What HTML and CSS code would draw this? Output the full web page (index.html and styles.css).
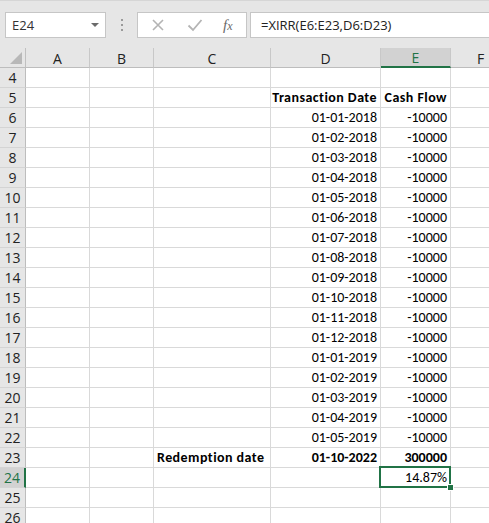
FILE: index.html
```html
<!DOCTYPE html>
<html>
<head>
<meta charset="utf-8">
<link rel="stylesheet" href="styles.css">
</head>
<body>
<div class="toolbar">
  <div class="namebox"><span class="namebox-text">E24</span><span class="dropdown"></span></div>
  <div class="grip"><span></span><span></span><span></span></div>
  <div class="fxbox">
    <svg class="icon" width="14" height="14" viewBox="0 0 14 14"><path d="M2 2 L12 12 M12 2 L2 12" stroke="#b4b4b4" stroke-width="1.6" fill="none"/></svg>
    <svg class="icon" width="16" height="14" viewBox="0 0 16 14"><path d="M1.5 7.5 L6 12 L14.5 2" stroke="#b4b4b4" stroke-width="1.8" fill="none"/></svg>
    <span class="fx">f<span class="fx-x">x</span></span>
  </div>
  <div class="formula">=XIRR(E6:E23,D6:D23)</div>
</div>
<div class="sheet">
  <div class="corner"><span class="tri"></span></div>
  <div class="colhead">A</div>
  <div class="colhead">B</div>
  <div class="colhead">C</div>
  <div class="colhead">D</div>
  <div class="colhead sel">E</div>
  <div class="colhead">F</div>

  <div class="rowhead">4</div><div class="cell"></div><div class="cell"></div><div class="cell"></div><div class="cell"></div><div class="cell"></div><div class="cell"></div>
  <div class="rowhead">5</div><div class="cell"></div><div class="cell"></div><div class="cell"></div><div class="cell b r wide">Transaction Date</div><div class="cell b r wide">Cash Flow</div><div class="cell"></div>
  <div class="rowhead">6</div><div class="cell"></div><div class="cell"></div><div class="cell"></div><div class="cell r">01-01-2018</div><div class="cell r">-10000</div><div class="cell"></div>
  <div class="rowhead">7</div><div class="cell"></div><div class="cell"></div><div class="cell"></div><div class="cell r">01-02-2018</div><div class="cell r">-10000</div><div class="cell"></div>
  <div class="rowhead">8</div><div class="cell"></div><div class="cell"></div><div class="cell"></div><div class="cell r">01-03-2018</div><div class="cell r">-10000</div><div class="cell"></div>
  <div class="rowhead">9</div><div class="cell"></div><div class="cell"></div><div class="cell"></div><div class="cell r">01-04-2018</div><div class="cell r">-10000</div><div class="cell"></div>
  <div class="rowhead">10</div><div class="cell"></div><div class="cell"></div><div class="cell"></div><div class="cell r">01-05-2018</div><div class="cell r">-10000</div><div class="cell"></div>
  <div class="rowhead">11</div><div class="cell"></div><div class="cell"></div><div class="cell"></div><div class="cell r">01-06-2018</div><div class="cell r">-10000</div><div class="cell"></div>
  <div class="rowhead">12</div><div class="cell"></div><div class="cell"></div><div class="cell"></div><div class="cell r">01-07-2018</div><div class="cell r">-10000</div><div class="cell"></div>
  <div class="rowhead">13</div><div class="cell"></div><div class="cell"></div><div class="cell"></div><div class="cell r">01-08-2018</div><div class="cell r">-10000</div><div class="cell"></div>
  <div class="rowhead">14</div><div class="cell"></div><div class="cell"></div><div class="cell"></div><div class="cell r">01-09-2018</div><div class="cell r">-10000</div><div class="cell"></div>
  <div class="rowhead">15</div><div class="cell"></div><div class="cell"></div><div class="cell"></div><div class="cell r">01-10-2018</div><div class="cell r">-10000</div><div class="cell"></div>
  <div class="rowhead">16</div><div class="cell"></div><div class="cell"></div><div class="cell"></div><div class="cell r">01-11-2018</div><div class="cell r">-10000</div><div class="cell"></div>
  <div class="rowhead">17</div><div class="cell"></div><div class="cell"></div><div class="cell"></div><div class="cell r">01-12-2018</div><div class="cell r">-10000</div><div class="cell"></div>
  <div class="rowhead">18</div><div class="cell"></div><div class="cell"></div><div class="cell"></div><div class="cell r">01-01-2019</div><div class="cell r">-10000</div><div class="cell"></div>
  <div class="rowhead">19</div><div class="cell"></div><div class="cell"></div><div class="cell"></div><div class="cell r">01-02-2019</div><div class="cell r">-10000</div><div class="cell"></div>
  <div class="rowhead">20</div><div class="cell"></div><div class="cell"></div><div class="cell"></div><div class="cell r">01-03-2019</div><div class="cell r">-10000</div><div class="cell"></div>
  <div class="rowhead">21</div><div class="cell"></div><div class="cell"></div><div class="cell"></div><div class="cell r">01-04-2019</div><div class="cell r">-10000</div><div class="cell"></div>
  <div class="rowhead">22</div><div class="cell"></div><div class="cell"></div><div class="cell"></div><div class="cell r">01-05-2019</div><div class="cell r">-10000</div><div class="cell"></div>
  <div class="rowhead">23</div><div class="cell"></div><div class="cell"></div><div class="cell b wide">Redemption date</div><div class="cell b r">01-10-2022</div><div class="cell b r">300000</div><div class="cell"></div>
  <div class="rowhead sel">24</div><div class="cell"></div><div class="cell"></div><div class="cell"></div><div class="cell"></div><div class="cell r active">14.87%<span class="frame"><span class="handle"></span></span></div><div class="cell"></div>
  <div class="rowhead">25</div><div class="cell"></div><div class="cell"></div><div class="cell"></div><div class="cell"></div><div class="cell"></div><div class="cell"></div>
  <div class="rowhead">26</div><div class="cell"></div><div class="cell"></div><div class="cell"></div><div class="cell"></div><div class="cell"></div><div class="cell"></div>
</div>
</body>
</html>
```

FILE: styles.css
```css
* { box-sizing: border-box; }
html, body { margin: 0; padding: 0; }
body {
  width: 489px;
  height: 523px;
  overflow: hidden;
  background: #ffffff;
  font-family: "Segoe UI", "Open Sans", "Noto Sans", sans-serif;
}
.toolbar {
  height: 48px;
  background: #e6e6e6;
  border-top: 1px solid #d6d6d6;
  display: flex;
  align-items: flex-start;
  padding-top: 11px;
  padding-left: 5px;
}
.namebox {
  width: 101px;
  height: 26px;
  background: #fff;
  border: 1px solid #c6c6c6;
  display: flex;
  align-items: center;
  justify-content: space-between;
  padding: 0 6px 0 6px;
  font-size: 13px;
  color: #333;
}
.dropdown {
  width: 0; height: 0;
  border-left: 4px solid transparent;
  border-right: 4px solid transparent;
  border-top: 4px solid #6b6b6b;
}
.grip {
  width: 31px;
  height: 26px;
  display: flex;
  flex-direction: column;
  align-items: center;
  justify-content: center;
  gap: 3px;
}
.grip span {
  width: 2px; height: 2px;
  background: #9a9a9a;
}
.fxbox {
  width: 110px;
  height: 26px;
  background: #fff;
  border: 1px solid #c6c6c6;
  display: flex;
  align-items: center;
  padding-left: 13px;
  gap: 22px;
}
.icon { display: block; }
.fx {
  font-family: "Liberation Serif", "DejaVu Serif", serif;
  font-style: italic;
  font-size: 15px;
  color: #6a6a6a;
  margin-left: -2px;
}
.fx-x { font-size: 12px; }
.formula {
  margin-left: 3px;
  flex: 1;
  height: 26px;
  background: #fff;
  border: 1px solid #c6c6c6;
  border-right: none;
  padding-left: 10px;
  font-size: 13px;
  line-height: 24px;
  color: #222;
}
.sheet {
  display: grid;
  grid-template-columns: 26px 64px 64px 117px 110px 70px 60px;
  grid-auto-rows: 20px;
}
.corner {
  background: #e6e6e6;
  border-right: 1px solid #c0c0c0;
  border-bottom: 1px solid #bdbdbd;
  display: flex;
  align-items: flex-end;
  justify-content: flex-end;
  padding: 0 3px 3px 0;
}
.tri {
  width: 0; height: 0;
  border-left: 12px solid transparent;
  border-bottom: 12px solid #b8b8b8;
}
.colhead {
  background: #e6e6e6;
  border-right: 1px solid #c8c8c8;
  border-bottom: 1px solid #bdbdbd;
  display: flex;
  align-items: center;
  justify-content: center;
  font-size: 14px;
  color: #222;
  padding-top: 1px;
}
.colhead.sel {
  background: #d2d2d2;
  color: #217346;
  border-bottom: 2px solid #217346;
}
.rowhead {
  background: #e6e6e6;
  border-right: 1px solid #bdbdbd;
  border-bottom: 1px solid #d4d4d4;
  display: flex;
  align-items: center;
  justify-content: center;
  font-size: 14px;
  color: #222;
}
.rowhead.sel {
  background: #d2d2d2;
  color: #217346;
  border-right: 2px solid #217346;
}
.cell {
  border-right: 1px solid #d9d9d9;
  border-bottom: 1px solid #d9d9d9;
  font-family: "Carlito", "Lato", "Liberation Sans", sans-serif;
  font-size: 14px;
  color: #000;
  display: flex;
  align-items: flex-end;
  padding: 0 3px 1px 3px;
  white-space: nowrap;
  line-height: 17px;
}
.cell.r { justify-content: flex-end; }
.cell.b { font-weight: bold; }
.cell.wide { letter-spacing: 0.45px; }
.active { position: relative; }
.frame {
  position: absolute;
  left: -2px; top: -2px; right: -1px; bottom: -1px;
  border: 2px solid #217346;
}
.handle {
  position: absolute;
  right: -5px; bottom: -5px;
  width: 7px; height: 7px;
  background: #217346;
  border: 1px solid #fff;
}
```
